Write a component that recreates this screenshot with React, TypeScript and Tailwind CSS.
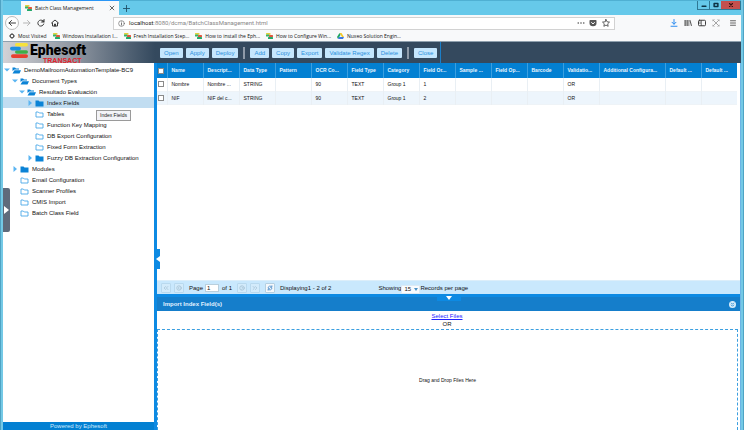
import type { ReactNode } from "react";

const CHROME_FONT = "font-['Open_Sans','Roboto',sans-serif]";

/** Ephesoft mark: yellow, blue, green and red bars */
function Mark({ className }: { className: string }) {
  return (
    <svg viewBox="0 0 18 16" className={className} aria-hidden="true">
      <rect x="5" y="0" width="13" height="3.600" rx="1.800" fill="#f7e23c" />
      <rect x="5" y="7.200" width="13" height="3.600" rx="1.800" fill="#3fae49" />
      <rect x="0" y="3.800" width="11" height="3.600" rx="1.800" fill="#1d8fe0" />
      <rect x="1" y="11.200" width="17" height="3.800" rx="1.900" fill="#e8402f" />
    </svg>
  );
}

function Favicon() {
  return (
    <svg viewBox="0 0 14 12" className="h-[6px] w-[7px] shrink-0" aria-hidden="true">
      <rect x="0" y="0" width="9" height="3.500" rx="1" fill="#e3cf3a" />
      <rect x="0" y="3" width="7" height="4" rx="1" fill="#35b36a" />
      <rect x="6" y="4" width="8" height="4" rx="1" fill="#e0573f" />
      <rect x="4" y="8" width="10" height="4" rx="1" fill="#22a86a" />
    </svg>
  );
}

function DriveIcon() {
  return (
    <svg viewBox="0 0 14 12" className="h-[6px] w-[7px] shrink-0" aria-hidden="true">
      <path d="M5 0h4l5 8h-4z" fill="#f8c822" />
      <path d="M5 0L0 8l2 4 5-8z" fill="#1fa463" />
      <path d="M4 8h10l-2 4H2z" fill="#3a78e8" />
    </svg>
  );
}

function GearIcon() {
  return (
    <svg viewBox="0 0 12 12" className="size-[6px] shrink-0" aria-hidden="true">
      <circle cx="6" cy="6" r="3.6" fill="none" stroke="#444" strokeWidth="2" />
      <path d="M6 0v2M6 10v2M0 6h2M10 6h2M2 2l1 1M9 9l1 1M2 10l1-1M9 3l1-1" stroke="#444" strokeWidth="1.6" />
    </svg>
  );
}

function Stroke({ className, children }: { className: string; children: ReactNode }) {
  return (
    <svg
      viewBox="0 0 16 16"
      className={className}
      fill="none"
      stroke="currentColor"
      strokeWidth="2"
      strokeLinecap="round"
      strokeLinejoin="round"
      aria-hidden="true"
    >
      {children}
    </svg>
  );
}

function TabStrip() {
  return (
    <div className="flex h-[15px] shrink-0 justify-between border-t border-[#4fb0d3] bg-[#66c9ea]">
      <div className="flex items-stretch">
        <div className="-mt-px ml-[18px] flex w-[98px] items-center border-t border-[#2b96f5] bg-[#f8f9fa] pr-1 pl-1 text-[5px] leading-[8px] text-[#111]">
          <Favicon />
          <span className="ml-[3px] grow whitespace-nowrap">Batch Class Management</span>
          <button type="button" aria-label="Close tab" className="text-[#333]">
            <Stroke className="size-[6px]">
              <path d="M3 3l10 10M13 3L3 13" />
            </Stroke>
          </button>
        </div>
        <button type="button" aria-label="New tab" className="ml-1 text-[#1e4f66]">
          <Stroke className="size-[7px]">
            <path d="M8 1v14M1 8h14" />
          </Stroke>
        </button>
      </div>
      <div className="flex h-[9px] border-x border-b border-[#2f7895] text-[#0d3345]">
        <button type="button" aria-label="Minimize" className="flex w-[12px] items-center justify-center border-r border-[#2f7895]">
          <Stroke className="size-[6px]">
            <path d="M3 11h10" strokeWidth="4" />
          </Stroke>
        </button>
        <button type="button" aria-label="Restore" className="flex w-[11px] items-center justify-center">
          <Stroke className="size-[6px]">
            <path d="M3 4h10v8H3z" strokeWidth="4" />
          </Stroke>
        </button>
        <button type="button" aria-label="Close window" className="flex w-[19px] items-center justify-center bg-[#c4504e] text-[#3a1010]">
          <Stroke className="size-[6px]">
            <path d="M4 4l8 8M12 4l-8 8" strokeWidth="3" />
          </Stroke>
        </button>
      </div>
    </div>
  );
}

function NavBar() {
  return (
    <div className="flex h-[16px] shrink-0 items-center bg-[#f8f9fa] pl-[2px] text-[#3d3d3d]">
      <button type="button" aria-label="Back" className="flex size-[14px] items-center justify-center rounded-full border border-[#bbb] bg-white">
        <Stroke className="size-[8px]">
          <path d="M15 8H2M7 3L2 8l5 5" />
        </Stroke>
      </button>
      <button type="button" aria-label="Forward" className="ml-1 text-[#b5b5b5]">
        <Stroke className="size-[8px]">
          <path d="M1 8h13M9 3l5 5-5 5" />
        </Stroke>
      </button>
      <button type="button" aria-label="Reload" className="ml-[6px]">
        <Stroke className="size-[8px]">
          <path d="M13.500 10A6 6 0 1 1 12 4l1.500 1.500" />
          <path d="M14.500 1v5.500H9z" fill="currentColor" strokeWidth="1" />
        </Stroke>
      </button>
      <button type="button" aria-label="Home" className="ml-[6px]">
        <Stroke className="size-[8px]">
          <path d="M1 8l7-6 7 6M3 8v6h10V8M7 14v-4h2v4" />
        </Stroke>
      </button>
      <div className="ml-[54px] flex h-[13px] grow items-center border border-[#d2d2d2] bg-white px-1">
        <Stroke className="size-[7px] shrink-0 text-[#666]">
          <circle cx="8" cy="8" r="6.500" strokeWidth="1.500" />
          <path d="M8 7.500v4M8 4.500v.2" />
        </Stroke>
        <div className="relative ml-[4px] grow font-['Roboto',sans-serif] text-[6px] leading-[8px]">
          <span aria-hidden="true" className="block whitespace-nowrap text-[#888]">
            <span className="text-[#222]">localhost</span>:8080/dcma/BatchClassManagement.html
          </span>
          <input
            aria-label="Address"
            className="absolute inset-0 w-full bg-transparent text-transparent outline-none"
          />
        </div>
        <button type="button" aria-label="Page actions">
          <svg viewBox="0 0 16 16" className="size-[8px]" fill="#555" aria-hidden="true">
            <circle cx="2.500" cy="8" r="1.600" />
            <circle cx="8" cy="8" r="1.600" />
            <circle cx="13.500" cy="8" r="1.600" />
          </svg>
        </button>
        <button type="button" aria-label="Save to Pocket" className="ml-1">
          <svg viewBox="0 0 16 16" className="size-[8px]" aria-hidden="true">
            <path d="M1 3.500Q1 2 2.500 2h11Q15 2 15 3.500V8a7 6.500 0 0 1-14 0z" fill="#555" />
            <path d="M4.500 6.500L8 9.800l3.500-3.300" fill="none" stroke="#fff" strokeWidth="2" />
          </svg>
        </button>
        <button type="button" aria-label="Bookmark" className="ml-[5px]">
          <Stroke className="size-[8px]">
            <path d="M8 1l2.100 4.600 4.900.6-3.600 3.400.9 5L8 12.200l-4.300 2.400.9-5L1 6.200l4.900-.6z" strokeWidth="1.600" />
          </Stroke>
        </button>
      </div>
      <div className="ml-[55px] flex items-center gap-[6px] pr-[4px]">
        <button type="button" aria-label="Downloads" className="text-[#2b8cf0]">
          <Stroke className="size-[8px]">
            <path d="M8 1v9M4 6.500L8 10.500l4-4M2 14.500h12" />
          </Stroke>
        </button>
        <button type="button" aria-label="Library">
          <svg viewBox="0 0 16 16" className="size-[8px]" fill="#555" aria-hidden="true">
            <path d="M1 2h2.500v12H1zM5 2h2.500v12H5zM9 2h1.500v12H9zM11 3l1.800-.8L16 13.500l-2 .7z" />
          </svg>
        </button>
        <button type="button" aria-label="Sidebars">
          <Stroke className="size-[8px]">
            <rect x="1" y="2.500" width="14" height="11" rx="2" />
            <path d="M6.500 3v10M3.500 6h1M3.500 8.500h1" strokeWidth="1.500" />
          </Stroke>
        </button>
        <button type="button" aria-label="Extension" className="text-[#a5a5a5]">
          <Stroke className="size-[8px]">
            <path d="M2 2l12 12M14 2L2 14M1 4l3-3M12 1l3 3M1 12l3 3M12 15l3-3" />
          </Stroke>
        </button>
        <button type="button" aria-label="Menu" className="ml-[3px] text-[#666]">
          <Stroke className="size-[8px]">
            <path d="M3 3.500h10M3 8h10M3 12.500h10" />
          </Stroke>
        </button>
      </div>
    </div>
  );
}

const BOOKMARKS = [
  { label: "Most Visited", icon: <GearIcon /> },
  { label: "Windows Installation I...", icon: <Favicon /> },
  { label: "Fresh Installation Step...", icon: <Favicon /> },
  { label: "How to install the Eph...", icon: <Favicon /> },
  { label: "How to Configure Win...", icon: <Favicon /> },
  { label: "Nuxeo Solution Engin...", icon: <DriveIcon /> },
];

function Bookmarks() {
  return (
    <nav className="flex h-[10px] shrink-0 items-center gap-[6px] bg-[#f8f9fa] pl-[6px] text-[5px] leading-[8px] text-[#111]">
      {BOOKMARKS.map((b) => (
        <a key={b.label} href="#" className="flex items-center gap-[3px] whitespace-nowrap">
          {b.icon}
          {b.label}
        </a>
      ))}
    </nav>
  );
}

function ToolButton({ children }: { children: ReactNode }) {
  return (
    <button type="button" className="h-[10px] rounded-[1px] bg-[#c5e6fd] px-1 text-[6px] leading-[10px] whitespace-nowrap text-[#2a90dc]">
      {children}
    </button>
  );
}

function Separator() {
  return <span className="mx-[2px] h-[12px] w-[2px] bg-[#8e9aa8]" />;
}

function AppHeader() {
  return (
    <header className="flex h-[22px] shrink-0 border-t border-[#8fa0ae] bg-[#34495e]">
      <div className="flex w-[152px] shrink-0 bg-linear-to-r from-[#d2d2d6] via-[#8a929d] to-[#34495e] pl-[7px]">
        <Mark className="mt-px h-[16px] w-[18px]" />
        <div className="ml-[2px] font-['Roboto','Liberation_Sans',sans-serif] font-bold">
          <p className="text-[14px] leading-[17px] font-black text-black">Ephesoft</p>
          <p className="ml-[13px] font-['Liberation_Sans',sans-serif] text-[7px] leading-[3px] text-[#e3222b]">TRANSACT</p>
        </div>
      </div>
      <div className="flex items-center gap-[3px] border-r border-[#1b7fc9] pt-px pr-[3px] pl-[5px]">
        <ToolButton>Open</ToolButton>
        <ToolButton>Apply</ToolButton>
        <ToolButton>Deploy</ToolButton>
        <Separator />
        <ToolButton>Add</ToolButton>
        <ToolButton>Copy</ToolButton>
        <ToolButton>Export</ToolButton>
        <ToolButton>Validate Regex</ToolButton>
        <ToolButton>Delete</ToolButton>
        <Separator />
        <ToolButton>Close</ToolButton>
      </div>
    </header>
  );
}

type Node = { label: string; level: number; state: "open" | "closed" | "leaf"; selected?: boolean };

const TREE: Node[] = [
  { label: "DemoMailroomAutomationTemplate-BC9", level: 0, state: "open" },
  { label: "Document Types", level: 1, state: "open" },
  { label: "Resultado Evaluación", level: 2, state: "open" },
  { label: "Index Fields", level: 3, state: "closed", selected: true },
  { label: "Tables", level: 3, state: "leaf" },
  { label: "Function Key Mapping", level: 3, state: "leaf" },
  { label: "DB Export Configuration", level: 3, state: "leaf" },
  { label: "Fixed Form Extraction", level: 3, state: "leaf" },
  { label: "Fuzzy DB Extraction Configuration", level: 3, state: "closed" },
  { label: "Modules", level: 1, state: "closed" },
  { label: "Email Configuration", level: 1, state: "leaf" },
  { label: "Scanner Profiles", level: 1, state: "leaf" },
  { label: "CMIS Import", level: 1, state: "leaf" },
  { label: "Batch Class Field", level: 1, state: "leaf" },
];

const INDENT = ["pl-[1px]", "pl-[9px]", "pl-[16px]", "pl-[24px]"];

function Arrow({ state }: { state: Node["state"] }) {
  return (
    <svg viewBox="0 0 12 12" className="size-[6px] shrink-0" fill="#5bb5f2" aria-hidden="true">
      {state === "open" && <path d="M0 3h12L6 9z" />}
      {state === "closed" && <path d="M3 0v12l7-6z" />}
    </svg>
  );
}

function Folder({ state }: { state: Node["state"] }) {
  return (
    <svg viewBox="0 0 18 14" className="h-[7px] w-[9px] shrink-0" aria-hidden="true">
      {state === "open" && <path d="M1 8V1h5l2 2h6v2H5zM5 6.500h13L15 13H1z" fill="#0b83d6" />}
      {state === "closed" && <path d="M1 1h6l2 2h8v10H1z" fill="#0b83d6" />}
      {state === "leaf" && <path d="M2 12V2h4.500l2 2H16v8z" fill="#fff" stroke="#4aa8e8" strokeWidth="1.800" />}
    </svg>
  );
}

function Sidebar() {
  return (
    <aside className="relative flex w-[151px] shrink-0 flex-col bg-white">
      <ul className="pt-px text-[6px] text-[#111]">
        {TREE.map((n) => (
          <li key={n.label} className={n.selected ? "bg-[#c1ddf1]" : ""}>
            <button type="button" className={`flex h-[11px] w-full items-center pt-px leading-[10px] whitespace-nowrap ${INDENT[n.level]}`}>
              <Arrow state={n.state} />
              <span className="mr-[3px] ml-[2px] flex">
                <Folder state={n.state} />
              </span>
              {n.label}
            </button>
          </li>
        ))}
      </ul>
      <div role="tooltip" className="absolute top-[47px] left-[93px] border border-[#9a9a9a] bg-[#f3f3f8] px-[3px] text-[5px] leading-[9px] whitespace-nowrap text-[#222]">
        Index Fields
      </div>
      <button type="button" aria-label="Show panel" className="absolute top-[125px] left-0 flex h-[44px] w-[7px] items-center justify-center rounded-r-[2px] bg-[#5f6b7c]">
        <svg viewBox="0 0 5 8" className="h-[8px] w-[5px]" fill="#fff" aria-hidden="true">
          <path d="M0 0l5 4-5 4z" />
        </svg>
      </button>
      <footer className="mt-auto h-[8px] bg-[#0380d2] text-center text-[6px] leading-[8px] text-[#cfeafd]">Powered by Ephesoft</footer>
    </aside>
  );
}

const COLUMNS = [
  "Name",
  "Descript...",
  "Data Type",
  "Pattern",
  "OCR Co...",
  "Field Type",
  "Category",
  "Field Or...",
  "Sample ...",
  "Field Op...",
  "Barcode",
  "Validatio...",
  "Additional Configura...",
  "Default ...",
  "Default ...",
];

const ROWS = [
  ["Nombre", "Nombre ...", "STRING", "", "90", "TEXT", "Group 1", "1", "", "", "", "OR", "", "", ""],
  ["NIF", "NIF del c...", "STRING", "", "90", "TEXT", "Group 1", "2", "", "", "", "OR", "", "", ""],
];

function Tick({ label }: { label: string }) {
  return <input type="checkbox" aria-label={label} className="block size-[6px] appearance-none border border-[#8a8a8a] bg-white" />;
}

function FieldTable() {
  return (
    <table className="w-full table-fixed text-left text-[5px] leading-[7px]">
      <thead className="bg-[#0380d2] text-[#e8f5ff]">
        <tr className="h-[15px]">
          <th className="w-[10px] pl-px">
            <Tick label="Select all" />
          </th>
          {COLUMNS.map((c, i) => (
            <th
              key={i}
              className={`border-l border-[#3b9fe0] pl-1 font-bold whitespace-nowrap ${c.startsWith("Additional") ? "w-[66px]" : "w-[36px]"}`}
            >
              {c}
            </th>
          ))}
        </tr>
      </thead>
      <tbody className="text-[#111]">
        {ROWS.map((row) => (
          <tr key={row[0]} className="h-[13px] border-b border-[#eef3f7] even:bg-[#edf5fc]">
            <td className="pl-px">
              <Tick label={`Select ${row[0]}`} />
            </td>
            {row.map((cell, i) => (
              <td key={i} className="border-l border-[#e9eff4] pt-px pl-1 whitespace-nowrap">
                {cell}
              </td>
            ))}
          </tr>
        ))}
      </tbody>
    </table>
  );
}

function PagerButton({ label, active, children }: { label: string; active?: boolean; children: ReactNode }) {
  return (
    <button
      type="button"
      aria-label={label}
      className={`flex size-[10px] items-center justify-center rounded-[1px] border ${active ? "border-[#b5cfe0] bg-[#f4f8fb] text-[#3b82c4]" : "border-[#b9d9ee] bg-[#d3ebfb] text-[#a3bfd2]"}`}
    >
      <Stroke className="size-[6px]">{children}</Stroke>
    </button>
  );
}

function Pager() {
  return (
    <div className="flex h-[14px] shrink-0 items-center border-t border-[#dceefa] bg-[#c9e8fd] pt-px pl-[4px] text-[6px] leading-[8px] whitespace-nowrap text-[#111]">
      <div className="flex gap-[3px]">
        <PagerButton label="First page">
          <path d="M7 4L3 8l4 4M13 4L9 8l4 4" />
        </PagerButton>
        <PagerButton label="Previous page">
          <circle cx="8" cy="8" r="6" />
          <path d="M9 5L6 8l3 3" />
        </PagerButton>
      </div>
      <label className="ml-[5px] flex items-center gap-[2px]">
        Page
        <input defaultValue="1" className="h-[8px] w-[14px] border border-[#b9cfdd] bg-white px-px text-[6px] leading-[6px]" />
      </label>
      <span className="ml-[3px]">of 1</span>
      <div className="ml-[5px] flex gap-[3px]">
        <PagerButton label="Next page">
          <circle cx="8" cy="8" r="6" />
          <path d="M7 5l3 3-3 3" />
        </PagerButton>
        <PagerButton label="Last page">
          <path d="M3 4l4 4-4 4M9 4l4 4-4 4" />
        </PagerButton>
      </div>
      <div className="ml-[5px]">
        <PagerButton label="Refresh" active>
          <path d="M3 7a5 5 0 0 1 9-2M13 2v4H9M13 9a5 5 0 0 1-9 2M3 14v-4h4" />
        </PagerButton>
      </div>
      <span className="ml-[5px]">Displaying1 - 2 of 2</span>
      <label className="ml-[47px] flex items-center self-stretch">
        Showing
        <span className="relative flex self-end">
          <select className="h-[9px] w-[19px] appearance-none border border-[#dceaf4] bg-[#f8fbfe] pl-[2px] text-[6px] leading-[7px]">
            <option>15</option>
          </select>
          <svg viewBox="0 0 8 6" className="pointer-events-none absolute top-[3px] right-[2px] h-[3px] w-[4px]" fill="#4a90c4" aria-hidden="true">
            <path d="M0 0h8L4 6z" />
          </svg>
        </span>
        Records per page
      </label>
    </div>
  );
}

function ImportPanel() {
  return (
    <section className="relative flex h-[136px] shrink-0 flex-col border-t-[3px] border-[#0d8ae3] bg-white">
      <button type="button" aria-label="Collapse import panel" className="absolute -top-px left-1/2 flex h-[5px] w-6 -translate-x-1/2 items-start justify-center bg-[#0d8ae3]">
        <svg viewBox="0 0 6 4" className="h-[4px] w-[6px]" fill="#fff" aria-hidden="true">
          <path d="M0 0h6L3 4z" />
        </svg>
      </button>
      <div className="flex h-[14px] shrink-0 items-center justify-between bg-[#157ecb] pr-[4px] pl-[6px]">
        <h2 className="text-[6px] leading-[8px] font-bold text-[#e2f2ff]">Import Index Field(s)</h2>
        <button type="button" aria-label="Toggle panel">
          <svg viewBox="0 0 14 14" className="size-[7px]" aria-hidden="true">
            <circle cx="7" cy="7" r="7" fill="#d8ecfa" />
            <path d="M4 3.500l3 3 3-3M4 7.500l3 3 3-3" fill="none" stroke="#157ecb" strokeWidth="1.600" />
          </svg>
        </button>
      </div>
      <div className="flex h-[18px] shrink-0 flex-col items-center pt-px pr-[3px] text-[6px] leading-[8px] text-[#111]">
        <a href="#" className="text-[#2222ff] underline">
          Select Files
        </a>
        <span>OR</span>
      </div>
      <div className="mr-[2px] flex grow items-center justify-center border border-b-0 border-dashed border-[#3b9fe0] pt-px text-[5px] leading-[7px] text-[#111]">
        Drag and Drop Files Here
      </div>
    </section>
  );
}

export default function App() {
  return (
    <div className="h-screen border-x border-[#4fa3c4] bg-white font-['Liberation_Sans',Arial,sans-serif]">
      <div className="flex h-full flex-col overflow-hidden border-x-2 border-[#74c9e6]">
        <div className={`flex shrink-0 flex-col ${CHROME_FONT}`}>
          <TabStrip />
          <NavBar />
          <Bookmarks />
        </div>
        <AppHeader />
        <div className="flex min-h-0 grow">
          <Sidebar />
          <main className="relative flex min-w-0 grow flex-col border-r border-l-[3px] border-r-[#6cb4e6] border-l-[#0d8ae3]">
            <div className="min-h-0 grow pr-1">
              <FieldTable />
            </div>
            <Pager />
            <ImportPanel />
            <button type="button" aria-label="Collapse tree" className="absolute top-[186px] -left-[2px] flex h-[20px] w-[5px] items-center justify-center bg-[#0d8ae3]">
              <svg viewBox="0 0 4 6" className="h-[6px] w-[4px]" fill="#fff" aria-hidden="true">
                <path d="M4 0v6L0 3z" />
              </svg>
            </button>
          </main>
        </div>
      </div>
    </div>
  );
}
